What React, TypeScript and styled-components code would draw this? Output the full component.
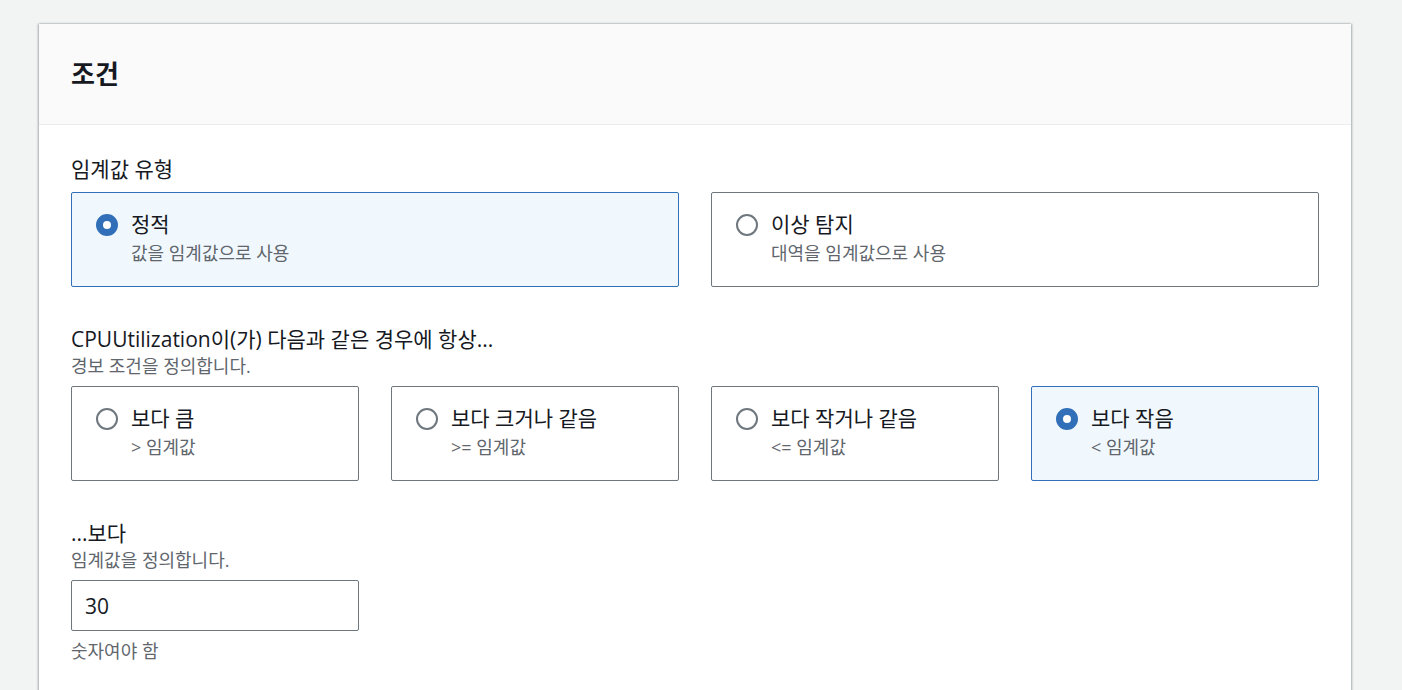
import { createGlobalStyle } from "styled-components";
import styled from "styled-components";

const GlobalStyle = createGlobalStyle`
  html, body {
    margin: 0;
    padding: 0;
    background: #f2f3f3;
  }
  body {
    font-family: "Open Sans", "Noto Sans CJK KR", sans-serif;
    color: #16191f;
  }
`;

const Page = styled.div`
  padding: 24px 51px 0 39px;
  height: 690px;
  box-sizing: border-box;
  overflow: hidden;
`;

const Card = styled.section`
  background: #ffffff;
  box-shadow: -1px 0 2px rgba(0, 28, 36, 0.3), 1px 0 2px rgba(0, 28, 36, 0.3);
  min-height: 700px;
`;

const Header = styled.header`
  background: #fafafa;
  border-bottom: 1px solid #eaeded;
  height: 101px;
  box-sizing: border-box;
  display: flex;
  align-items: center;
  padding: 0 32px 2px;
`;

const Title = styled.h2`
  margin: 0;
  font-size: 26px;
  font-weight: 700;
  color: #16191f;
`;

const Body = styled.div`
  padding: 31px 32px 0;
  display: flex;
  flex-direction: column;
  gap: 39px;
`;

const Field = styled.div`
  display: flex;
  flex-direction: column;
`;

const Label = styled.div`
  font-size: 21px;
  line-height: 26px;
  color: #16191f;
`;

const Description = styled.div`
  font-size: 18px;
  line-height: 24px;
  margin-top: 2px;
  color: #5f666d;
`;

const Control = styled.div<{ $gap: number }>`
  margin-top: ${(p) => p.$gap}px;
`;

const TileGrid = styled.div<{ $cols: number }>`
  display: grid;
  grid-template-columns: repeat(${(p) => p.$cols}, 1fr);
  gap: 32px;
`;

const Tile = styled.div<{ $selected?: boolean }>`
  display: flex;
  align-items: flex-start;
  gap: 13px;
  box-sizing: border-box;
  height: 95px;
  padding: 18px 24px 0;
  border: 1px solid ${(p) => (p.$selected ? "#3170b8" : "#6f777e")};
  border-radius: 2px;
  background: ${(p) => (p.$selected ? "#f1f8fd" : "#ffffff")};
`;

const Radio = styled.span<{ $checked?: boolean }>`
  flex: none;
  width: 22px;
  height: 22px;
  margin-top: 3px;
  box-sizing: border-box;
  border-radius: 50%;
  border: ${(p) => (p.$checked ? "7px solid #3170b8" : "2px solid #6f777e")};
  background: #ffffff;
`;

const TileText = styled.div`
  display: flex;
  flex-direction: column;
`;

const TileTitle = styled.div`
  font-size: 21px;
  line-height: 26px;
  color: #16191f;
`;

const TileDesc = styled.div`
  font-size: 18px;
  line-height: 24px;
  margin-top: 4px;
  color: #5f666d;
`;

const InputBox = styled.div`
  width: 288px;
  height: 51px;
  box-sizing: border-box;
  border: 1px solid #6f777e;
  border-radius: 2px;
  display: flex;
  align-items: center;
  padding: 0 13px;
  font-size: 21px;
  color: #16191f;
`;

const Constraint = styled.div`
  margin-top: 8px;
  font-size: 18px;
  line-height: 24px;
  color: #5f666d;
`;

type Option = { title: string; desc: string; selected?: boolean };

const thresholdTypes: Option[] = [
  { title: "정적", desc: "값을 임계값으로 사용", selected: true },
  { title: "이상 탐지", desc: "대역을 임계값으로 사용" },
];

const conditions: Option[] = [
  { title: "보다 큼", desc: "> 임계값" },
  { title: "보다 크거나 같음", desc: ">= 임계값" },
  { title: "보다 작거나 같음", desc: "<= 임계값" },
  { title: "보다 작음", desc: "< 임계값", selected: true },
];

function Tiles({ options }: { options: Option[] }) {
  return (
    <TileGrid $cols={options.length}>
      {options.map((o) => (
        <Tile key={o.title} $selected={o.selected}>
          <Radio $checked={o.selected} />
          <TileText>
            <TileTitle>{o.title}</TileTitle>
            <TileDesc>{o.desc}</TileDesc>
          </TileText>
        </Tile>
      ))}
    </TileGrid>
  );
}

export default function App() {
  return (
    <>
      <GlobalStyle />
      <Page>
        <Card>
          <Header>
            <Title>조건</Title>
          </Header>
          <Body>
            <Field>
              <Label>임계값 유형</Label>
              <Control $gap={10}>
                <Tiles options={thresholdTypes} />
              </Control>
            </Field>
            <Field>
              <Label>CPUUtilization이(가) 다음과 같은 경우에 항상...</Label>
              <Description>경보 조건을 정의합니다.</Description>
              <Control $gap={8}>
                <Tiles options={conditions} />
              </Control>
            </Field>
            <Field>
              <Label>...보다</Label>
              <Description>임계값을 정의합니다.</Description>
              <Control $gap={8}>
                <InputBox>30</InputBox>
              </Control>
              <Constraint>숫자여야 함</Constraint>
            </Field>
          </Body>
        </Card>
      </Page>
    </>
  );
}
